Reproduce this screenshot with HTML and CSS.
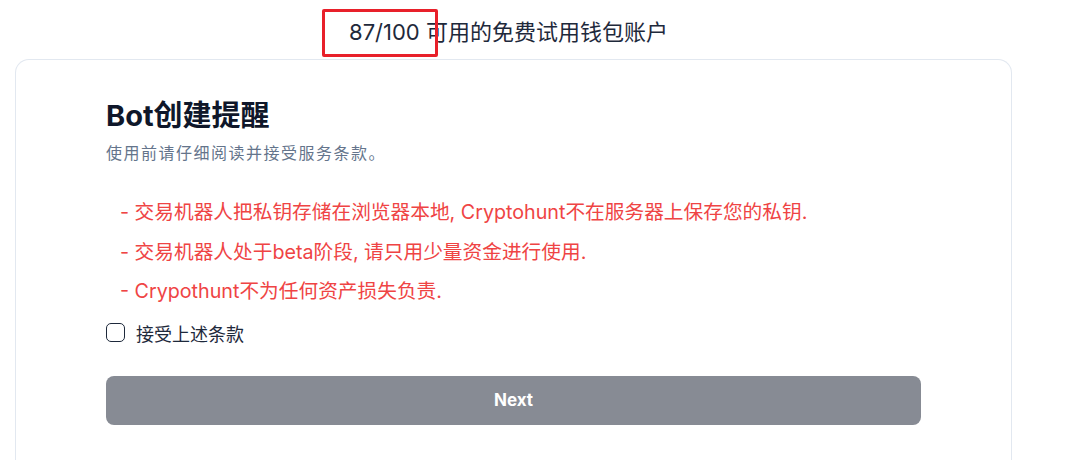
FILE: index.html
```html
<!DOCTYPE html>
<html>
<head>
    <meta name="viewport" content="width=device-width, initial-scale=1">
    <title>Bot创建提醒</title>
    <link rel="stylesheet" href="styles.css">
</head>
<body>
    <div class="trial-count">
        <span class="count">87/100<span class="highlight"></span></span> 可用的免费试用钱包账户
    </div>

    <div class="card">
        <h1>Bot创建提醒</h1>
        <p class="subtitle">使用前请仔细阅读并接受服务条款。</p>

        <ul class="terms">
            <li>- 交易机器人把私钥存储在浏览器本地, Cryptohunt不在服务器上保存您的私钥.</li>
            <li>- 交易机器人处于beta阶段, 请只用少量资金进行使用.</li>
            <li>- Crypothunt不为任何资产损失负责.</li>
        </ul>

        <label class="accept">
            <input type="checkbox">
            <span>接受上述条款</span>
        </label>

        <button class="next" disabled>Next</button>
    </div>
</body>
</html>
```

FILE: styles.css
```css
body {
    margin: 0;
    font-family: Inter, "Noto Sans CJK SC", sans-serif;
    color: #0f172a;
    background: #fff;
}

.trial-count {
    width: 997px;
    margin-left: 15px;
    padding-right: 10px;
    box-sizing: border-box;
    text-align: center;
    font-size: 22px;
    line-height: 32px;
    padding-top: 16px;
    height: 59px;
    color: #1e293b;
}

.count {
    position: relative;
}

.highlight {
    position: absolute;
    left: -27px;
    right: -18px;
    top: -10px;
    bottom: -12px;
    border: 3px solid #e8202a;
    border-radius: 2px;
}

.card {
    width: 997px;
    margin-left: 15px;
    box-sizing: border-box;
    border: 1px solid #e2e8f0;
    border-bottom: none;
    border-radius: 14px 14px 0 0;
    padding: 38px 90px 0;
    height: 401px;
    overflow: hidden;
}

h1 {
    margin: 0;
    font-size: 29px;
    line-height: 36px;
    font-weight: 700;
    color: #0f172a;
}

.subtitle {
    margin: 7px 0 0;
    font-size: 16px;
    line-height: 24px;
    color: #64748b;
    letter-spacing: 1.5px;
}

.terms {
    list-style: none;
    margin: 28px 0 0;
    padding: 0 0 0 14px;
    color: #ef4444;
    font-size: 19.7px;
}

.terms li {
    line-height: 39.5px;
}

.accept {
    display: flex;
    align-items: center;
    gap: 11px;
    margin-top: 8px;
    font-size: 18px;
    color: #1e293b;
}

.accept input {
    appearance: none;
    margin: 0;
    width: 19px;
    height: 19px;
    border: 1.5px solid #1e293b;
    border-radius: 5px;
}

.next {
    display: block;
    width: 100%;
    height: 49px;
    margin-top: 30px;
    border: none;
    border-radius: 8px;
    background: #878b94;
    color: #fff;
    font-family: inherit;
    font-size: 17px;
    font-weight: 700;
}
```
